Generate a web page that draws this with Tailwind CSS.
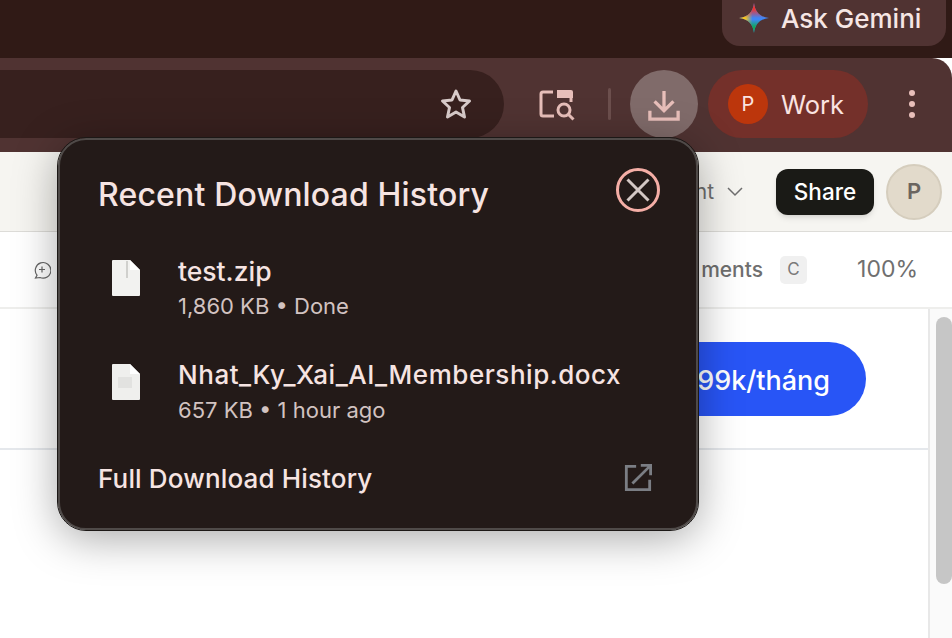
<!DOCTYPE html>
<html lang="en">
<head>
  <meta charset="utf-8" />
  <title>Recent Download History</title>
  <script src="https://cdn.jsdelivr.net/npm/@tailwindcss/browser@4"></script>
</head>
<body class="bg-white font-['Inter',sans-serif] h-[638px] w-[952px] overflow-hidden relative">

  <!-- tab strip -->
  <div class="h-[58px] bg-[#301a16] flex justify-end pr-[6px]">
    <div class="h-[46px] w-[224px] bg-[#503332] rounded-b-[18px] flex items-center pl-[14px] pb-[10px] gap-[9px] text-[#f6e6e4] text-[26px] font-medium">
      <svg width="36" height="36" viewBox="0 0 36 36">
        <defs>
          <linearGradient id="gemTop" x1="0" y1="0" x2="0" y2="1">
            <stop offset="0.2" stop-color="#f0332f" />
            <stop offset="0.5" stop-color="#f0332f" stop-opacity="0" />
          </linearGradient>
          <linearGradient id="gemBottom" x1="0" y1="1" x2="0" y2="0">
            <stop offset="0.2" stop-color="#0fa958" />
            <stop offset="0.45" stop-color="#0fa958" stop-opacity="0" />
          </linearGradient>
          <linearGradient id="gemLeft" x1="0" y1="0" x2="1" y2="0">
            <stop offset="0.2" stop-color="#fbc916" />
            <stop offset="0.45" stop-color="#fbc916" stop-opacity="0" />
          </linearGradient>
        </defs>
        <path d="M18 3C19 12 24 17 33 18 24 19 19 24 18 33 17 24 12 19 3 18 12 17 17 12 18 3Z" fill="#3f86f5" />
        <path d="M18 3C19 12 24 17 33 18 24 19 19 24 18 33 17 24 12 19 3 18 12 17 17 12 18 3Z" fill="url(#gemLeft)" />
        <path d="M18 3C19 12 24 17 33 18 24 19 19 24 18 33 17 24 12 19 3 18 12 17 17 12 18 3Z" fill="url(#gemBottom)" />
        <path d="M18 3C19 12 24 17 33 18 24 19 19 24 18 33 17 24 12 19 3 18 12 17 17 12 18 3Z" fill="url(#gemTop)" />
      </svg>
      <span>Ask Gemini</span>
    </div>
  </div>

  <!-- toolbar -->
  <div class="h-[94px] bg-[#503332] rounded-tr-[20px] flex items-start pt-[12px]">
    <div class="w-[504px] h-[68px] bg-[#37201e] rounded-r-[34px] flex items-center justify-end pr-[31px]">
      <svg width="34" height="34" viewBox="0 0 34 34" fill="none" stroke="#d8cbca" stroke-width="3" stroke-linejoin="round"><path d="M17 4l4 9 9.500 1-7 6.500 2 9.500-8.500-5-8.500 5 2-9.500-7-6.500 9.500-1z" /></svg>
    </div>
    <div class="ml-[35px] h-[68px] flex items-center">
      <svg width="36" height="34" viewBox="0 0 36 34" fill="none">
        <path d="M14 5H4a2 2 0 0 0-2 2v20a2 2 0 0 0 2 2h11" stroke="#e8bfba" stroke-width="3" />
        <path d="M18 3h14a2 2 0 0 1 2 2v6H18z" fill="#e8bfba" />
        <path d="M32 11v4" stroke="#e8bfba" stroke-width="3" />
        <circle cx="25" cy="23" r="6" stroke="#e8bfba" stroke-width="3" />
        <path d="M29.500 27.500l5 5" stroke="#e8bfba" stroke-width="3" />
      </svg>
    </div>
    <div class="ml-[33px] mt-[18px] w-[3px] h-[32px] rounded-full bg-[#6c4f4d]"></div>
    <div class="ml-[19px] w-[68px] h-[68px] rounded-full bg-[#806b6a] flex items-center justify-center">
      <svg class="mt-[4px]" width="32" height="32" viewBox="0 0 34 34" fill="none" stroke="#e8bfba" stroke-width="3.500">
        <path d="M17 1v20M7 12l10 10 10-10" />
        <path d="M2 22v9h30v-9" />
      </svg>
    </div>
    <div class="ml-[10px] w-[160px] h-[68px] rounded-full bg-[#74302a] flex items-center pl-[20px] gap-[13px] text-[#fbe4e1] text-[25.500px]">
      <div class="w-[40px] h-[40px] rounded-full bg-[#bc360c] flex items-center justify-center text-[20px]">P</div>
      <span class="pt-[3px]">Work</span>
    </div>
    <div class="ml-[41px] h-[68px] flex flex-col justify-center gap-[5px]">
      <div class="w-[6px] h-[6px] rounded-full bg-[#e8bfba]"></div>
      <div class="w-[6px] h-[6px] rounded-full bg-[#e8bfba]"></div>
      <div class="w-[6px] h-[6px] rounded-full bg-[#e8bfba]"></div>
    </div>
  </div>

  <!-- page -->
  <div class="h-[80px] bg-[#f6f5f1] border-b border-[#dddcd8] flex items-center justify-end pr-[10px]">
    <span class="text-[21px] text-[#6f6f6f] mr-[12px]">nt</span>
    <svg width="18" height="10" viewBox="0 0 18 10" fill="none" stroke="#6f6f6f" stroke-width="1.500"><path d="M2 1l7 7 7-7" /></svg>
    <div class="ml-[32px] w-[98px] h-[46px] bg-[#1a1a16] rounded-[12px] shadow-md flex items-center justify-center pt-[1px] text-white text-[22.500px] font-medium">Share</div>
    <div class="ml-[12px] w-[56px] h-[56px] rounded-full bg-[#e2dacb] border-2 border-[#d5cdbd] flex items-center justify-center text-[#6b6560] text-[22px] font-semibold">P</div>
  </div>
  <div class="h-[77px] border-b-2 border-[#eeeeec] flex items-center pl-[33px] pr-[34px]">
    <svg width="18" height="18" viewBox="0 0 18 18" fill="none" stroke="#666" stroke-width="1.200">
      <path d="M2.500 17l1.500-2.800A7.800 7.800 0 1 1 7 16.500z" />
      <path d="M9 5.500v6M6 8.500h6" />
    </svg>
    <span class="ml-auto text-[21px] text-[#6f6f6f] font-medium">ments</span>
    <span class="ml-[17px] w-[27px] h-[28px] rounded-[5px] bg-[#f0f0f0] text-[#7a7a7a] text-[17px] flex items-center justify-center">C</span>
    <span class="ml-[50px] text-[23px] text-[#6f6f6f]">100%</span>
  </div>
  <div class="flex h-[329px]">
    <div class="w-[928px]">
      <div class="h-[141px] border-b-2 border-[#e5e8ec] flex items-center justify-end pr-[62px]">
        <div class="w-[300px] h-[74px] bg-[#2855f6] rounded-full flex items-center justify-end pr-[36px] pt-[5px] text-white text-[27px] font-medium">99k/tháng</div>
      </div>
    </div>
    <div class="w-[24px] bg-[#fafafa] border-l-2 border-[#e8e8e8] pt-[8px] pl-[6px]">
      <div class="w-[16px] h-[267px] bg-[#c6c6c6] rounded-full"></div>
    </div>
  </div>

  <!-- download bubble -->
  <div class="absolute left-[58px] top-[138px] z-20 w-[640px] h-[392px] bg-[#231a18] rounded-[28px] border-2 border-[#4f4a48] outline outline-[#1c1816] shadow-[0_8px_44px_rgba(0,0,0,0.35)] px-[38px] text-[#f6e4e2]">
    <div class="flex items-center justify-between h-[110px]">
      <h2 class="text-[32px] font-medium tracking-[0.17px]">Recent Download History</h2>
      <svg class="mr-[-3px] mb-[10px]" width="46" height="46" viewBox="0 0 46 46" fill="none">
        <circle cx="23" cy="23" r="20.500" stroke="#f5aea6" stroke-width="3" />
        <path d="M12.500 12.500l21 21M33.500 12.500l-21 21" stroke="#d4c8c5" stroke-width="3" />
      </svg>
    </div>
    <div class="flex items-start h-[104px] pl-[14px]">
      <svg class="mt-[10px]" width="28" height="36" viewBox="0 0 28 36">
        <path d="M1 0h17l10 10v25a1 1 0 0 1-1 1H1a1 1 0 0 1-1-1V1a1 1 0 0 1 1-1z" fill="#f2f2f0" />
        <path d="M18 0v10h10z" fill="#ffffff" />
        <path d="M15 1v17" stroke="#c4c4c2" stroke-width="1.500" />
      </svg>
      <div class="ml-[38px] mt-[4px]">
        <div class="text-[26.500px] font-medium leading-[34px]">test.zip</div>
        <div class="text-[22px] text-[#d2c3c1] leading-[34px] mt-[1px]">1,860 KB • Done</div>
      </div>
    </div>
    <div class="flex items-start h-[104px] pl-[14px]">
      <svg class="mt-[10px]" width="28" height="36" viewBox="0 0 28 36">
        <path d="M1 0h17l10 10v25a1 1 0 0 1-1 1H1a1 1 0 0 1-1-1V1a1 1 0 0 1 1-1z" fill="#efefed" />
        <path d="M18 0v10h10z" fill="#ffffff" />
        <path d="M6 13h14v11H6z" fill="#e2e2e0" />
      </svg>
      <div class="ml-[38px] mt-[4px]">
        <div class="text-[26px] font-medium leading-[34px] tracking-[0.55px]">Nhat_Ky_Xai_AI_Membership.docx</div>
        <div class="text-[22px] text-[#d2c3c1] leading-[34px] mt-[1px]">657 KB • 1 hour ago</div>
      </div>
    </div>
    <div class="flex items-center justify-between h-[34px] mt-[3px]">
      <span class="text-[26px] font-medium tracking-[0.15px]">Full Download History</span>
      <svg class="mr-[6px]" width="28" height="28" viewBox="0 0 30 30" fill="none" stroke="#7b7e84" stroke-width="3">
        <path d="M13 2.500H2.500v25h25V17" />
        <path d="M18 1.500h10.500V12M28 2L9 21" />
      </svg>
    </div>
  </div>
</body>
</html>
